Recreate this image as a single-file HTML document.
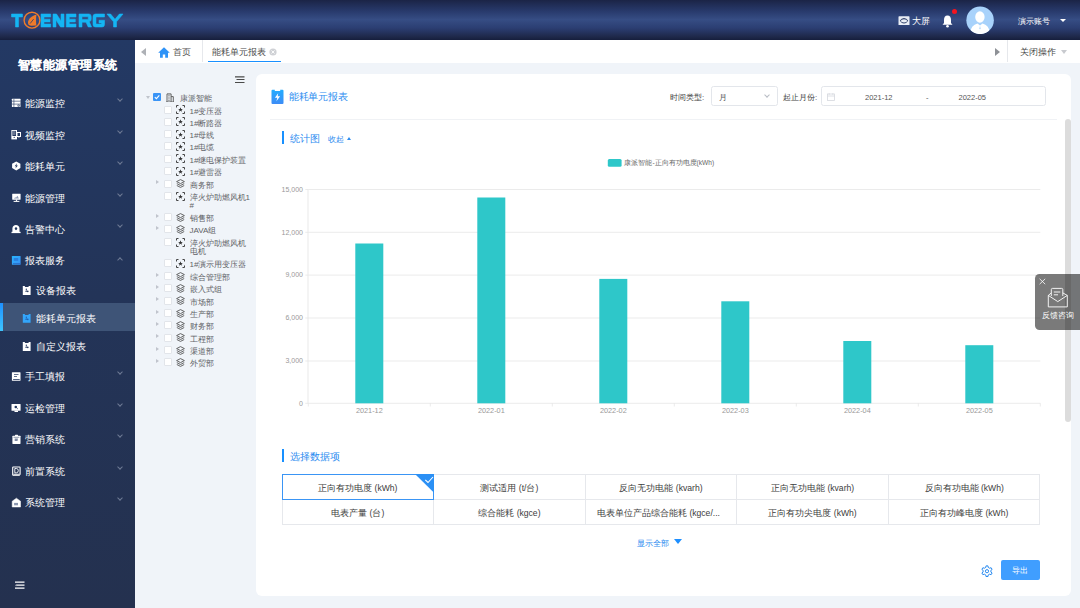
<!DOCTYPE html>
<html><head><meta charset="utf-8">
<style>
*{box-sizing:border-box;margin:0;padding:0}
html,body{width:1080px;height:608px;overflow:hidden;font-family:"Liberation Sans",sans-serif;background:#f0f4f9;position:relative}
.abs{position:absolute}
#hdr{left:0;top:0;width:1080px;height:40px;background:linear-gradient(180deg,#1b2446 0%,#283a6c 28%,#364d84 49%,#2b3e72 70%,#1e2849 92%,#161e3c 100%)}
#side{left:0;top:40px;width:135px;height:568px;background:linear-gradient(180deg,#233964 0%,#233458 45%,#24314f 100%)}
#stitle{left:0;top:56.5px;-webkit-text-stroke:0.12px #fff;width:135px;text-align:center;color:#fff;font-size:12px;font-weight:bold;line-height:16px;letter-spacing:0.5px;padding-left:0px}
.mi{position:absolute;left:0;width:135px;height:20px;color:#fff;font-size:10px;line-height:20px}
.mi .t{position:absolute;left:25px;top:0;white-space:nowrap}
.mi svg{position:absolute;left:10.5px;top:4px;width:10px;height:11px}
.mi .ch{position:absolute;left:118.3px;top:3px;width:4px;height:4px;border-right:1px solid #6f7b95;border-bottom:1px solid #6f7b95;transform:rotate(45deg)}
.mi .ch.up{transform:rotate(-135deg);top:6.5px}
.sub .t{left:36px}
.sub svg{left:21.8px}
#tabs{left:135px;top:40px;width:945px;height:22.5px;background:#fff}
.tx{position:absolute;white-space:nowrap}
.tr{position:absolute;font-size:8px;color:#606266;white-space:nowrap;line-height:8.3px}
#card{left:256px;top:73.8px;width:815px;height:522.6px;background:#fff;border-radius:6px}
</style></head><body>
<div id="hdr" class="abs">
<svg class="abs" style="left:0;top:0" width="135" height="40" viewBox="0 0 135 40">
 <g fill="#14b5f4" fill-rule="evenodd" stroke="#14b5f4" stroke-width=".55" stroke-linejoin="round">
  <path d="M11.5,14H22.5V17H18.5V27H15.5V17H11.5Z"/>
  <path d="M41,14H50.7V17H44V19.2H50V21.9H44V24H50.7V27H41Z"/>
  <path d="M53,14H56.5L61,21V14H64V27H60.5L56,20V27H53Z"/>
  <path d="M66.3,14H76V17H69.3V19.2H75.3V21.9H69.3V24H76V27H66.3Z"/>
  <path d="M79,14H89Q91.2,14 91.2,16.5V19Q91.2,21.3 89.3,21.8L91.6,27H88.2L86,22.2H82V27H79ZM82,16.8V19.4H88.2V16.8Z"/>
  <path d="M93,16.5Q93,14 95.5,14H104.5V17H96V24H101.5V23H99V20.3H104.5V24.5Q104.5,27 102,27H95.5Q93,27 93,24.5Z"/>
  <path d="M106.9,14H110.6L115,19.3L119.4,14H123L116.5,21.8V27H113.5V21.8Z"/>
 </g>
 <circle cx="32" cy="20.2" r="7.9" fill="none" stroke="#ee7b2b" stroke-width="1.4"/><path d="M36.5,14.8C32.5,15.3 28,18.8 28,22.8C28,25 29.4,25.7 31.5,25.7L36.4,25.5C35.9,21.8 35.9,18.2 36.5,14.8Z" fill="#ee7b2b"/><path d="M30.4,23.2 33.4,19.4" stroke="#2a3d6b" stroke-width=".8" stroke-linecap="round"/></svg>
<!-- header right -->
<svg class="abs" style="left:897.5px;top:15.5px" width="12" height="9.5" viewBox="0 0 12 9.5"><rect x="0.5" y="0.3" width="11" height="9" rx=".6" fill="#e9edf5"/><path d="M1.8,4.8Q3.5,2 6,2Q8.5,2 10.2,4.8Q8.5,7.5 6,7.5Q3.5,7.5 1.8,4.8Z" fill="#2b3d68"/><ellipse cx="6" cy="4.8" rx="3" ry="1.6" fill="#e9edf5"/></svg>
<div class="tx" style="left:911.5px;top:16.3px;font-size:8.5px;color:#fff;line-height:11px">大屏</div>
<svg class="abs" style="left:941px;top:14px" width="13" height="14" viewBox="0 0 13 14"><path d="M6.5,1.5C4,1.5 3,3.5 3,6V9L1.5,10.8H11.5L10,9V6C10,3.5 9,1.5 6.5,1.5Z" fill="#fff"/><circle cx="6.5" cy="12.2" r="1.3" fill="#fff"/></svg>
<div class="abs" style="left:951.5px;top:9px;width:5px;height:5px;border-radius:50%;background:#f5141e"></div>
<svg class="abs" style="left:966px;top:6px" width="28" height="28" viewBox="0 0 28 28"><defs><clipPath id="cav"><circle cx="14.1" cy="14.3" r="13.75"/></clipPath></defs><circle cx="14.1" cy="14.3" r="13.75" fill="#a8d2fb"/><ellipse cx="13.9" cy="11" rx="4.7" ry="5.8" fill="#fff"/><path clip-path="url(#cav)" d="M4.5,26Q5,19.5 11.5,17.6L14,19.5L16.5,17.6Q23,19.5 23.5,26V29H4.5Z" fill="#fff"/><path d="M14,19.8 13.4,22.5 14,23.5 14.6,22.5Z" fill="#a8d2fb"/></svg>
<div class="tx" style="left:1017.5px;top:15.7px;font-size:7.8px;color:#fff;line-height:12px">演示账号</div>
<div class="abs" style="left:1059.5px;top:19px;width:0;height:0;border-left:3px solid transparent;border-right:3px solid transparent;border-top:3.5px solid #fff"></div>
</div>

<div id="side" class="abs"></div>
<div id="stitle" class="abs">智慧能源管理系统</div>
<div class="mi" style="top:94px"><svg viewBox="0 0 10 11"><rect x="0.9" y="0.8" width="8.6" height="8.3" rx=".5" fill="#fff"/><path d="M0.9,3.2H9.5M0.9,6.1H9.5M2.9,0.8V9.1" stroke="#24385f" stroke-width=".6"/><circle cx="7.6" cy="7.7" r="1.1" fill="#24385f"/><circle cx="7.6" cy="7.7" r=".5" fill="#fff"/></svg><span class="t">能源监控</span><i class="ch"></i></div>
<div class="mi" style="top:126px"><svg viewBox="0 0 10 11"><rect x="0.9" y="0.4" width="4.6" height="8.5" fill="none" stroke="#fff" stroke-width="1"/><rect x="0.9" y="6" width="4.6" height="3" fill="#fff"/><circle cx="3.2" cy="7.4" r=".6" fill="#24385f"/><path d="M2,2H4.5M2,4H4.5" stroke="#fff" stroke-width=".6"/><rect x="6" y="2.5" width="3.5" height="4" fill="none" stroke="#fff" stroke-width="1"/><path d="M7,6.5 8,8.2 8.6,6.5Z" fill="#fff"/></svg><span class="t">视频监控</span><i class="ch"></i></div>
<div class="mi" style="top:157px"><svg viewBox="0 0 10 11"><path d="M5.25,0.4 9.4,2.7V7.1L5.25,9.4 1.1,7.1V2.7Z" fill="#fff"/><path d="M6,2.2 3.7,5.3H5.1L4.4,7.6 6.9,4.4H5.4Z" fill="#24385f"/></svg><span class="t">能耗单元</span><i class="ch"></i></div>
<div class="mi" style="top:189px"><svg viewBox="0 0 10 11"><rect x="1.2" y="0.7" width="8.4" height="6" rx=".4" fill="#fff"/><path d="M2.8,5.6 4.3,4.2 5,4.8 6.4,2.8 7.9,5.6Z" fill="#8d9ab5"/><rect x="4.9" y="6.5" width="1.2" height="1.6" fill="#fff"/><rect x="2.6" y="7.9" width="5.8" height="1" fill="#fff"/></svg><span class="t">能源管理</span><i class="ch"></i></div>
<div class="mi" style="top:220px"><svg viewBox="0 0 10 11"><path d="M1.4,7.9V4.4C1.4,2.3 3,0.9 4.95,0.9C6.9,0.9 8.5,2.3 8.5,4.4V7.9Z" fill="#fff"/><rect x="0.5" y="7.8" width="9.1" height="1.3" fill="#fff"/><path d="M5,3.2Q6.2,3.2 6.2,4.4Q6.2,5.3 5,6.2Q3.8,5.3 3.8,4.4Q3.8,3.2 5,3.2Z" fill="#24385f"/></svg><span class="t">告警中心</span><i class="ch"></i></div>
<div class="mi" style="top:251px"><svg viewBox="0 0 10 11"><defs><linearGradient id="gbb" x1="0" y1="0" x2="1" y2="1"><stop offset="0" stop-color="#27b6ff"/><stop offset="1" stop-color="#3a8ef5"/></linearGradient></defs><rect x="0.9" y="1" width="8.7" height="8.8" rx=".6" fill="url(#gbb)"/><rect x="2.8" y="3" width="4.4" height="2.9" fill="#2a7fe0"/><path d="M2,8.6H9" stroke="#2660b8" stroke-width=".7"/></svg><span class="t">报表服务</span><i class="ch up"></i></div>
<div class="mi sub" style="top:281px"><svg viewBox="0 0 10 11"><path d="M0.8,0.9H2.6L3.2,2H6.3L6.9,0.9H8.6V10H0.8Z" fill="#fff"/><path d="M4.3,3.6V5.6" stroke="#24385f" stroke-width="1"/><path d="M3.3,6.4H5.8" stroke="#24385f" stroke-width=".8"/><circle cx="5.8" cy="6.4" r=".8" fill="#24385f"/></svg><span class="t">设备报表</span></div>
<div class="abs" style="left:0;top:303px;width:135px;height:28px;background:#3e5477"></div>
<div class="abs" style="left:0;top:303px;width:3.3px;height:28px;background:linear-gradient(180deg,#1e90ff,#3ec6ff)"></div>
<div class="mi sub" style="top:309px"><svg viewBox="0 0 10 11"><path d="M0.8,0.9H2.6L3.2,2H6.3L6.9,0.9H8.6V9.8H0.8Z" fill="#33a6fb"/><path d="M4.3,3.6V5.6" stroke="#1f5fb0" stroke-width="1"/><path d="M3.3,6.4H5.8" stroke="#1f5fb0" stroke-width=".8"/><circle cx="5.8" cy="6.4" r=".8" fill="#1f5fb0"/></svg><span class="t">能耗单元报表</span></div>
<div class="mi sub" style="top:337px"><svg viewBox="0 0 10 11"><path d="M0.8,0.9H2.6L3.2,2H6.3L6.9,0.9H8.6V10H0.8Z" fill="#fff"/><path d="M4.3,3.6V5.6" stroke="#24385f" stroke-width="1"/><path d="M3.3,6.4H5.8" stroke="#24385f" stroke-width=".8"/><circle cx="5.8" cy="6.4" r=".8" fill="#24385f"/></svg><span class="t">自定义报表</span></div>
<div class="mi" style="top:367px"><svg viewBox="0 0 10 11"><rect x="0.9" y="1.2" width="8.6" height="8.6" rx=".5" fill="#fff"/><path d="M3,3.5H7.5M3,5.5H6" stroke="#24385f" stroke-width=".7"/><path d="M2.1,8.5H8.7" stroke="#24385f" stroke-width=".8"/></svg><span class="t">手工填报</span><i class="ch"></i></div>
<div class="mi" style="top:399px"><svg viewBox="0 0 10 11"><rect x="0.5" y="0.9" width="9.1" height="6.9" rx=".4" fill="#fff"/><rect x="3.5" y="7.6" width="3.5" height="1.4" fill="#fff"/><circle cx="4.8" cy="4" r="1.3" fill="#24385f"/><path d="M5.6,4.8 6.8,5.9" stroke="#24385f" stroke-width=".8"/></svg><span class="t">运检管理</span><i class="ch"></i></div>
<div class="mi" style="top:430px"><svg viewBox="0 0 10 11"><rect x="1.4" y="1.8" width="8.1" height="8.2" rx=".4" fill="#fff"/><rect x="4" y="0.8" width="3" height="1.6" rx=".5" fill="#fff"/><path d="M2.5,3.3H8.4" stroke="#24385f" stroke-width=".5"/><path d="M3.7,4.5H7L6.5,7H3.7Z" fill="#7f8aa3"/></svg><span class="t">营销系统</span><i class="ch"></i></div>
<div class="mi" style="top:462px"><svg viewBox="0 0 10 11"><path d="M1.7,9.3V1.6Q1.7,1 2.3,1H8.5Q9.1,1 9.1,1.6V8.2H2.5" fill="none" stroke="#fff" stroke-width="1.1"/><path d="M1.7,9.4H8.8" stroke="#fff" stroke-width=".9"/><path d="M3.8,2.5H5.4Q7.3,2.5 7.3,4.6Q7.3,6.8 5.4,6.8H3.8Z" fill="none" stroke="#fff" stroke-width=".9"/></svg><span class="t">前置系统</span><i class="ch"></i></div>
<div class="mi" style="top:493px"><svg viewBox="0 0 10 11"><path d="M1.2,4.2 5.4,1.2 9.6,4.2V10H1.2Z" fill="#fff" stroke="#fff" stroke-width=".5" stroke-linejoin="round"/><rect x="3.1" y="5.9" width="3.9" height="2.4" fill="#8a96af"/></svg><span class="t">系统管理</span><i class="ch"></i></div>
<svg class="abs" style="left:14.5px;top:581px" width="10" height="8.5" viewBox="0 0 10 8.5"><path d="M0,1.2H9.5M2,4.2H9.5M0,7.1H9.5" stroke="#fff" stroke-width="1.2"/><path d="M1.6,3.1 0.2,4.2 1.6,5.3Z" fill="#fff"/></svg>

<div id="tabs" class="abs"></div>
<div class="abs" style="left:140.5px;top:47.5px;width:0;height:0;border-top:4.5px solid transparent;border-bottom:4.5px solid transparent;border-right:5.5px solid #aeb1b6"></div>
<svg class="abs" style="left:157.5px;top:46.5px" width="12" height="11" viewBox="0 0 12 11"><path d="M6,0.3 0.2,5.8H2V10.8H4.8V7.5H7.2V10.8H10V5.8H11.8Z" fill="#2f93f7"/></svg>
<div class="tx" style="left:173px;top:46px;font-size:9px;color:#555;line-height:12px">首页</div>
<div class="abs" style="left:202px;top:40px;width:1px;height:22px;background:#e6e8ec"></div>
<div class="tx" style="left:212px;top:46px;font-size:9px;color:#4a4a4a;line-height:12px">能耗单元报表</div>
<svg class="abs" style="left:268.5px;top:48px" width="8" height="8" viewBox="0 0 8 8"><circle cx="4" cy="4" r="3.6" fill="#cfd1d5"/><path d="M2.5,2.5 5.5,5.5M5.5,2.5 2.5,5.5" stroke="#fff" stroke-width=".9"/></svg>
<div class="abs" style="left:207.5px;top:60.8px;width:73.5px;height:1.3px;background:#1890ff"></div>
<div class="abs" style="left:995px;top:47.5px;width:0;height:0;border-top:4.5px solid transparent;border-bottom:4.5px solid transparent;border-left:5.5px solid #8e9196"></div>
<div class="abs" style="left:1007px;top:40px;width:1px;height:22px;background:#e6e8ec"></div>
<div class="tx" style="left:1020px;top:46px;font-size:9px;color:#4a4a4a;line-height:12px">关闭操作</div>
<div class="abs" style="left:1061px;top:50px;width:0;height:0;border-left:3.5px solid transparent;border-right:3.5px solid transparent;border-top:4px solid #c8cacf"></div>

<!-- tree -->
<svg class="abs" style="left:235px;top:75px" width="10" height="9" viewBox="0 0 10 9"><path d="M0,1.8H9.5M1.5,4.5H9.5M0,7.5H9.5" stroke="#4a4a4a" stroke-width="1.2"/></svg>

<svg width="0" height="0" style="position:absolute"><defs><symbol id="idev" viewBox="0 0 9 9"><path d="M0.5,2.5V0.5H2.5M6.5,0.5H8.5V2.5M8.5,6.5V8.5H6.5M2.5,8.5H0.5V6.5" fill="none" stroke="#444" stroke-width="1"/><path d="M4.5,2.2 5.1,3.9 6.9,3.9 5.5,5 6,6.7 4.5,5.7 3,6.7 3.5,5 2.1,3.9 3.9,3.9Z" fill="#333"/></symbol><symbol id="igrp" viewBox="0 0 9 9"><path d="M4.5,0.6 8.4,2.6 4.5,4.6 0.6,2.6Z" fill="none" stroke="#555" stroke-width=".9"/><path d="M0.8,4.6 4.5,6.5 8.2,4.6M0.8,6.5 4.5,8.4 8.2,6.5" fill="none" stroke="#555" stroke-width=".9"/></symbol><symbol id="ibld" viewBox="0 0 8 9.5"><path d="M1,9V0.9H5.1V9M5.1,3.6H7.3V9M0.2,9H7.8" fill="none" stroke="#555" stroke-width=".9"/><path d="M2,2.3H2.7M3.4,2.3H4.1M2,4.1H2.7M3.4,4.1H4.1M2,5.9H2.7M3.4,5.9H4.1M2,7.6H2.7M3.4,7.6H4.1" stroke="#555" stroke-width=".8"/></symbol></defs></svg>
<div class="abs" style="left:146px;top:95.5px;width:0;height:0;border-left:2.5px solid transparent;border-right:2.5px solid transparent;border-top:3px solid #c0c4cc"></div>
<div class="abs" style="left:153.3px;top:93px;width:8px;height:8px;border-radius:1px;background:#3a94f6"></div>
<svg class="abs" style="left:153.3px;top:93px" width="8" height="8" viewBox="0 0 8 8"><path d="M1.8,4.1 3.4,5.6 6.3,2.4" fill="none" stroke="#fff" stroke-width="1.1"/></svg>
<svg class="abs" style="left:166.3px;top:92.6px" width="8" height="9.5"><use href="#ibld"/></svg>
<div class="tr" style="left:179.6px;top:94.5px">康派智能</div>
<div class="abs" style="left:163.6px;top:105.5px;width:8px;height:8px;border-radius:1px;background:#fff;border:0.6px solid #e2e5ea"></div>
<svg class="abs" style="left:176px;top:105.1px" width="9" height="9"><use href="#idev"/></svg>
<div class="tr" style="left:189.6px;top:107.5px">1#变压器</div>
<div class="abs" style="left:163.6px;top:117.8px;width:8px;height:8px;border-radius:1px;background:#fff;border:0.6px solid #e2e5ea"></div>
<svg class="abs" style="left:176px;top:117.4px" width="9" height="9"><use href="#idev"/></svg>
<div class="tr" style="left:189.6px;top:119.8px">1#断路器</div>
<div class="abs" style="left:163.6px;top:130.0px;width:8px;height:8px;border-radius:1px;background:#fff;border:0.6px solid #e2e5ea"></div>
<svg class="abs" style="left:176px;top:129.6px" width="9" height="9"><use href="#idev"/></svg>
<div class="tr" style="left:189.6px;top:132.0px">1#母线</div>
<div class="abs" style="left:163.6px;top:142.1px;width:8px;height:8px;border-radius:1px;background:#fff;border:0.6px solid #e2e5ea"></div>
<svg class="abs" style="left:176px;top:141.7px" width="9" height="9"><use href="#idev"/></svg>
<div class="tr" style="left:189.6px;top:144.1px">1#电缆</div>
<div class="abs" style="left:163.6px;top:154.7px;width:8px;height:8px;border-radius:1px;background:#fff;border:0.6px solid #e2e5ea"></div>
<svg class="abs" style="left:176px;top:154.3px" width="9" height="9"><use href="#idev"/></svg>
<div class="tr" style="left:189.6px;top:156.7px">1#继电保护装置</div>
<div class="abs" style="left:163.6px;top:167.0px;width:8px;height:8px;border-radius:1px;background:#fff;border:0.6px solid #e2e5ea"></div>
<svg class="abs" style="left:176px;top:166.6px" width="9" height="9"><use href="#idev"/></svg>
<div class="tr" style="left:189.6px;top:169.0px">1#避雷器</div>
<div class="abs" style="left:156.4px;top:180.3px;width:0;height:0;border-top:2.5px solid transparent;border-bottom:2.5px solid transparent;border-left:3px solid #c0c4cc"></div>
<div class="abs" style="left:163.6px;top:179.5px;width:8px;height:8px;border-radius:1px;background:#fff;border:0.6px solid #e2e5ea"></div>
<svg class="abs" style="left:176px;top:179.1px" width="9" height="9"><use href="#igrp"/></svg>
<div class="tr" style="left:189.6px;top:181.5px">商务部</div>
<div class="abs" style="left:163.6px;top:192.2px;width:8px;height:8px;border-radius:1px;background:#fff;border:0.6px solid #e2e5ea"></div>
<svg class="abs" style="left:176px;top:191.8px" width="9" height="9"><use href="#idev"/></svg>
<div class="tr" style="left:189.6px;top:194.2px">淬火炉助燃风机1</div>
<div class="tr" style="left:189.6px;top:202.4px">#</div>
<div class="abs" style="left:156.4px;top:213.7px;width:0;height:0;border-top:2.5px solid transparent;border-bottom:2.5px solid transparent;border-left:3px solid #c0c4cc"></div>
<div class="abs" style="left:163.6px;top:212.9px;width:8px;height:8px;border-radius:1px;background:#fff;border:0.6px solid #e2e5ea"></div>
<svg class="abs" style="left:176px;top:212.5px" width="9" height="9"><use href="#igrp"/></svg>
<div class="tr" style="left:189.6px;top:214.9px">销售部</div>
<div class="abs" style="left:156.4px;top:226.1px;width:0;height:0;border-top:2.5px solid transparent;border-bottom:2.5px solid transparent;border-left:3px solid #c0c4cc"></div>
<div class="abs" style="left:163.6px;top:225.3px;width:8px;height:8px;border-radius:1px;background:#fff;border:0.6px solid #e2e5ea"></div>
<svg class="abs" style="left:176px;top:224.9px" width="9" height="9"><use href="#igrp"/></svg>
<div class="tr" style="left:189.6px;top:227.3px">JAVA组</div>
<div class="abs" style="left:163.6px;top:238.1px;width:8px;height:8px;border-radius:1px;background:#fff;border:0.6px solid #e2e5ea"></div>
<svg class="abs" style="left:176px;top:237.7px" width="9" height="9"><use href="#idev"/></svg>
<div class="tr" style="left:189.6px;top:240.1px">淬火炉助燃风机</div>
<div class="tr" style="left:189.6px;top:248.3px">电机</div>
<div class="abs" style="left:163.6px;top:259.3px;width:8px;height:8px;border-radius:1px;background:#fff;border:0.6px solid #e2e5ea"></div>
<svg class="abs" style="left:176px;top:258.9px" width="9" height="9"><use href="#idev"/></svg>
<div class="tr" style="left:189.6px;top:261.3px">1#演示用变压器</div>
<div class="abs" style="left:156.4px;top:272.7px;width:0;height:0;border-top:2.5px solid transparent;border-bottom:2.5px solid transparent;border-left:3px solid #c0c4cc"></div>
<div class="abs" style="left:163.6px;top:271.9px;width:8px;height:8px;border-radius:1px;background:#fff;border:0.6px solid #e2e5ea"></div>
<svg class="abs" style="left:176px;top:271.5px" width="9" height="9"><use href="#igrp"/></svg>
<div class="tr" style="left:189.6px;top:273.9px">综合管理部</div>
<div class="abs" style="left:156.4px;top:285.0px;width:0;height:0;border-top:2.5px solid transparent;border-bottom:2.5px solid transparent;border-left:3px solid #c0c4cc"></div>
<div class="abs" style="left:163.6px;top:284.2px;width:8px;height:8px;border-radius:1px;background:#fff;border:0.6px solid #e2e5ea"></div>
<svg class="abs" style="left:176px;top:283.8px" width="9" height="9"><use href="#igrp"/></svg>
<div class="tr" style="left:189.6px;top:286.2px">嵌入式组</div>
<div class="abs" style="left:156.4px;top:297.3px;width:0;height:0;border-top:2.5px solid transparent;border-bottom:2.5px solid transparent;border-left:3px solid #c0c4cc"></div>
<div class="abs" style="left:163.6px;top:296.5px;width:8px;height:8px;border-radius:1px;background:#fff;border:0.6px solid #e2e5ea"></div>
<svg class="abs" style="left:176px;top:296.1px" width="9" height="9"><use href="#igrp"/></svg>
<div class="tr" style="left:189.6px;top:298.5px">市场部</div>
<div class="abs" style="left:156.4px;top:309.7px;width:0;height:0;border-top:2.5px solid transparent;border-bottom:2.5px solid transparent;border-left:3px solid #c0c4cc"></div>
<div class="abs" style="left:163.6px;top:308.9px;width:8px;height:8px;border-radius:1px;background:#fff;border:0.6px solid #e2e5ea"></div>
<svg class="abs" style="left:176px;top:308.5px" width="9" height="9"><use href="#igrp"/></svg>
<div class="tr" style="left:189.6px;top:310.9px">生产部</div>
<div class="abs" style="left:156.4px;top:322.0px;width:0;height:0;border-top:2.5px solid transparent;border-bottom:2.5px solid transparent;border-left:3px solid #c0c4cc"></div>
<div class="abs" style="left:163.6px;top:321.2px;width:8px;height:8px;border-radius:1px;background:#fff;border:0.6px solid #e2e5ea"></div>
<svg class="abs" style="left:176px;top:320.8px" width="9" height="9"><use href="#igrp"/></svg>
<div class="tr" style="left:189.6px;top:323.2px">财务部</div>
<div class="abs" style="left:156.4px;top:334.3px;width:0;height:0;border-top:2.5px solid transparent;border-bottom:2.5px solid transparent;border-left:3px solid #c0c4cc"></div>
<div class="abs" style="left:163.6px;top:333.5px;width:8px;height:8px;border-radius:1px;background:#fff;border:0.6px solid #e2e5ea"></div>
<svg class="abs" style="left:176px;top:333.1px" width="9" height="9"><use href="#igrp"/></svg>
<div class="tr" style="left:189.6px;top:335.5px">工程部</div>
<div class="abs" style="left:156.4px;top:346.7px;width:0;height:0;border-top:2.5px solid transparent;border-bottom:2.5px solid transparent;border-left:3px solid #c0c4cc"></div>
<div class="abs" style="left:163.6px;top:345.9px;width:8px;height:8px;border-radius:1px;background:#fff;border:0.6px solid #e2e5ea"></div>
<svg class="abs" style="left:176px;top:345.5px" width="9" height="9"><use href="#igrp"/></svg>
<div class="tr" style="left:189.6px;top:347.9px">渠道部</div>
<div class="abs" style="left:156.4px;top:359.1px;width:0;height:0;border-top:2.5px solid transparent;border-bottom:2.5px solid transparent;border-left:3px solid #c0c4cc"></div>
<div class="abs" style="left:163.6px;top:358.3px;width:8px;height:8px;border-radius:1px;background:#fff;border:0.6px solid #e2e5ea"></div>
<svg class="abs" style="left:176px;top:357.9px" width="9" height="9"><use href="#igrp"/></svg>
<div class="tr" style="left:189.6px;top:360.3px">外贸部</div>
<div id="card" class="abs"></div>
<!-- card header -->
<svg class="abs" style="left:271px;top:88.5px" width="13" height="15.5" viewBox="0 0 13 15.5"><defs><linearGradient id="gclip" x1="0" y1="0" x2="0" y2="1"><stop offset="0" stop-color="#22acff"/><stop offset="1" stop-color="#3d8cf6"/></linearGradient></defs><path d="M1.5,0.8H3.8V2H9.2V0.8H11.5Q12.5,0.8 12.5,1.8V14Q12.5,15 11.5,15H1.5Q0.5,15 0.5,14V1.8Q0.5,0.8 1.5,0.8Z" fill="url(#gclip)"/><path d="M7.2,4.2 3.9,8.8H6.3L5.4,12.3 9.1,7.3H6.7Z" fill="#fff"/></svg>
<div class="tx" style="left:289px;top:90px;font-size:10px;letter-spacing:-0.3px;color:#2c8cf0;line-height:13px">能耗单元报表</div>
<div class="tx" style="left:670px;top:92px;font-size:7.8px;color:#444;line-height:11px">时间类型:</div>
<div class="abs" style="left:710.5px;top:86.3px;width:67px;height:20px;border:0.8px solid #e3e6eb;border-radius:2.5px;background:#fff"></div>
<div class="tx" style="left:718.5px;top:92px;font-size:7.8px;color:#555;line-height:11px">月</div>
<div class="abs" style="left:765px;top:93px;width:4px;height:4px;border-right:0.8px solid #b8bcc4;border-bottom:0.8px solid #b8bcc4;transform:rotate(45deg)"></div>
<div class="tx" style="left:783px;top:92px;font-size:7.8px;color:#444;line-height:11px">起止月份:</div>
<div class="abs" style="left:820.5px;top:86.3px;width:225px;height:20px;border:0.8px solid #e3e6eb;border-radius:2.5px;background:#fff"></div>
<svg class="abs" style="left:827px;top:93px" width="8" height="8" viewBox="0 0 8 8"><rect x=".5" y="1" width="7" height="6.5" fill="none" stroke="#d5d8de" stroke-width=".8"/><path d="M.5,3H7.5M2.2,.2V1.8M5.8,.2V1.8" stroke="#d5d8de" stroke-width=".8"/></svg>
<div class="tx" style="left:865px;top:92px;font-size:7.5px;color:#555;line-height:11px">2021-12</div>
<div class="tx" style="left:926px;top:92px;font-size:7.5px;color:#555;line-height:11px">-</div>
<div class="tx" style="left:958.5px;top:92px;font-size:7.5px;color:#555;line-height:11px">2022-05</div>
<div class="abs" style="left:270px;top:118.5px;width:787px;height:1px;background:#f0f2f5"></div>
<div class="abs" style="left:1065px;top:119px;width:6px;height:303px;border-radius:3px;background:#dcdcdc"></div>
<!-- stat header -->
<div class="abs" style="left:281.5px;top:130.7px;width:2.3px;height:13.7px;background:#1890ff"></div>
<div class="tx" style="left:290px;top:131.8px;font-size:9.8px;color:#2c8cf0;line-height:13px">统计图</div>
<div class="tx" style="left:327.5px;top:133.7px;font-size:7.8px;color:#2c8cf0;line-height:11px">收起</div>
<div class="abs" style="left:346.5px;top:137px;width:0;height:0;border-left:2.8px solid transparent;border-right:2.8px solid transparent;border-bottom:3.2px solid #2c8cf0"></div>
<!-- select section -->
<!--CHART--><svg class="abs" style="left:0;top:0" width="1080" height="608" viewBox="0 0 1080 608" font-family="Liberation Sans, sans-serif">
<path d="M308.3,189.5H1040.3" stroke="#e6e6e6" stroke-width="0.8"/>
<path d="M305.3,189.5H308.3" stroke="#e6e6e6" stroke-width="0.8"/>
<text x="303" y="191.8" text-anchor="end" font-size="7" fill="#999">15,000</text>
<path d="M308.3,232.3H1040.3" stroke="#e6e6e6" stroke-width="0.8"/>
<path d="M305.3,232.3H308.3" stroke="#e6e6e6" stroke-width="0.8"/>
<text x="303" y="234.60000000000002" text-anchor="end" font-size="7" fill="#999">12,000</text>
<path d="M308.3,275.1H1040.3" stroke="#e6e6e6" stroke-width="0.8"/>
<path d="M305.3,275.1H308.3" stroke="#e6e6e6" stroke-width="0.8"/>
<text x="303" y="277.40000000000003" text-anchor="end" font-size="7" fill="#999">9,000</text>
<path d="M308.3,318.0H1040.3" stroke="#e6e6e6" stroke-width="0.8"/>
<path d="M305.3,318.0H308.3" stroke="#e6e6e6" stroke-width="0.8"/>
<text x="303" y="320.3" text-anchor="end" font-size="7" fill="#999">6,000</text>
<path d="M308.3,361.0H1040.3" stroke="#e6e6e6" stroke-width="0.8"/>
<path d="M305.3,361.0H308.3" stroke="#e6e6e6" stroke-width="0.8"/>
<text x="303" y="363.3" text-anchor="end" font-size="7" fill="#999">3,000</text>
<path d="M308.3,403.3H1040.3" stroke="#e6e6e6" stroke-width="0.8"/>
<path d="M305.3,403.3H308.3" stroke="#e6e6e6" stroke-width="0.8"/>
<text x="303" y="405.6" text-anchor="end" font-size="7" fill="#999">0</text>
<path d="M308,189.5V403.3" stroke="#e6e6e6" stroke-width="0.9"/>
<path d="M308.3,403.3V406.5" stroke="#e6e6e6" stroke-width="0.8"/>
<path d="M430.3,403.3V406.5" stroke="#e6e6e6" stroke-width="0.8"/>
<path d="M552.3,403.3V406.5" stroke="#e6e6e6" stroke-width="0.8"/>
<path d="M674.3,403.3V406.5" stroke="#e6e6e6" stroke-width="0.8"/>
<path d="M796.3,403.3V406.5" stroke="#e6e6e6" stroke-width="0.8"/>
<path d="M918.3,403.3V406.5" stroke="#e6e6e6" stroke-width="0.8"/>
<path d="M1040.3,403.3V406.5" stroke="#e6e6e6" stroke-width="0.8"/>
<rect x="355.3" y="243.5" width="28" height="159.8" fill="#2ec7c9"/>
<text x="369.3" y="413.2" text-anchor="middle" font-size="7.3" fill="#999">2021-12</text>
<rect x="477.3" y="197.5" width="28" height="205.8" fill="#2ec7c9"/>
<text x="491.3" y="413.2" text-anchor="middle" font-size="7.3" fill="#999">2022-01</text>
<rect x="599.3" y="278.9" width="28" height="124.4" fill="#2ec7c9"/>
<text x="613.3" y="413.2" text-anchor="middle" font-size="7.3" fill="#999">2022-02</text>
<rect x="721.3" y="301.3" width="28" height="102.0" fill="#2ec7c9"/>
<text x="735.3" y="413.2" text-anchor="middle" font-size="7.3" fill="#999">2022-03</text>
<rect x="843.3" y="341.0" width="28" height="62.3" fill="#2ec7c9"/>
<text x="857.3" y="413.2" text-anchor="middle" font-size="7.3" fill="#999">2022-04</text>
<rect x="965.3" y="345.2" width="28" height="58.1" fill="#2ec7c9"/>
<text x="979.3" y="413.2" text-anchor="middle" font-size="7.3" fill="#999">2022-05</text>
<rect x="607.8" y="158.9" width="13.8" height="7.8" rx="1.5" fill="#2ec7c9"/>
<text x="624.4" y="164.6" font-size="6.6" fill="#666">康派智能-正向有功电度(kWh)</text>
</svg><!--/CHART-->
<div class="abs" style="left:281.5px;top:448.8px;width:2.3px;height:13.7px;background:#1890ff"></div>
<div class="tx" style="left:290px;top:449.5px;font-size:9.8px;color:#2c8cf0;line-height:13px">选择数据项</div>

<div class="abs" style="left:282px;top:474px;width:758.0px;height:51.0px;border:1px solid #e6e8ec;background:#fff"></div>
<div class="abs" style="left:433px;top:474px;width:1px;height:50.0px;background:#e6e8ec"></div>
<div class="abs" style="left:585px;top:474px;width:1px;height:50.0px;background:#e6e8ec"></div>
<div class="abs" style="left:736px;top:474px;width:1px;height:50.0px;background:#e6e8ec"></div>
<div class="abs" style="left:888px;top:474px;width:1px;height:50.0px;background:#e6e8ec"></div>
<div class="abs" style="left:282px;top:499.0px;width:758.0px;height:1px;background:#e6e8ec"></div>
<div class="tx" style="left:282.0px;top:483.2px;width:151.6px;text-align:center;font-size:8.6px;color:#3c3c3c;line-height:11px">正向有功电度 (kWh)</div>
<div class="tx" style="left:433.6px;top:483.2px;width:151.6px;text-align:center;font-size:8.6px;color:#3c3c3c;line-height:11px">测试适用 (t/台)</div>
<div class="tx" style="left:585.2px;top:483.2px;width:151.6px;text-align:center;font-size:8.6px;color:#3c3c3c;line-height:11px">反向无功电能 (kvarh)</div>
<div class="tx" style="left:736.8px;top:483.2px;width:151.6px;text-align:center;font-size:8.6px;color:#3c3c3c;line-height:11px">正向无功电能 (kvarh)</div>
<div class="tx" style="left:888.4px;top:483.2px;width:151.6px;text-align:center;font-size:8.6px;color:#3c3c3c;line-height:11px">反向有功电能 (kWh)</div>
<div class="tx" style="left:282.0px;top:507.8px;width:151.6px;text-align:center;font-size:8.6px;color:#3c3c3c;line-height:11px">电表产量 (台)</div>
<div class="tx" style="left:433.6px;top:507.8px;width:151.6px;text-align:center;font-size:8.6px;color:#3c3c3c;line-height:11px">综合能耗 (kgce)</div>
<div class="tx" style="left:597px;top:507.8px;font-size:8.6px;color:#3c3c3c;line-height:11px">电表单位产品综合能耗 (kgce/...</div>
<div class="tx" style="left:736.8px;top:507.8px;width:151.6px;text-align:center;font-size:8.6px;color:#3c3c3c;line-height:11px">正向有功尖电度 (kWh)</div>
<div class="tx" style="left:888.4px;top:507.8px;width:151.6px;text-align:center;font-size:8.6px;color:#3c3c3c;line-height:11px">正向有功峰电度 (kWh)</div>
<div class="abs" style="left:282px;top:474px;width:152px;height:26px;border:1px solid #3a95f5"></div>
<svg class="abs" style="left:414.6px;top:474px" width="19.8" height="19.5" viewBox="0 0 19.8 19.5"><path d="M0,0H19.8V19.5Z" fill="#2b90f5"/><path d="M10.3,5.8 13,8.5 18,3" fill="none" stroke="#fff" stroke-width="1.1"/></svg>
<div class="tx" style="left:637px;top:539px;font-size:7.5px;color:#2c8cf0;line-height:10px">显示全部</div>
<div class="abs" style="left:674px;top:539px;width:0;height:0;border-left:4px solid transparent;border-right:4px solid transparent;border-top:5.5px solid #1e8fff"></div>
<svg class="abs" style="left:980.6px;top:564.6px" width="12" height="12.5" viewBox="0 0 12 12.5"><path d="M4.83,2.37 L4.97,0.90 L7.03,0.90 L7.17,2.37 L8.73,3.27 L10.08,2.66 L11.11,4.44 L9.90,5.30 L9.90,7.10 L11.11,7.96 L10.08,9.74 L8.73,9.13 L7.17,10.03 L7.03,11.50 L4.97,11.50 L4.83,10.03 L3.27,9.13 L1.92,9.74 L0.89,7.96 L2.10,7.10 L2.10,5.30 L0.89,4.44 L1.92,2.66 L3.27,3.27Z" fill="none" stroke="#2c8cf0" stroke-width="1" stroke-linejoin="round"/><circle cx="6" cy="6.2" r="1.6" fill="none" stroke="#2c8cf0" stroke-width="1"/></svg>
<div class="abs" style="left:1000.5px;top:560px;width:39.3px;height:19.7px;border-radius:2px;background:#409eff"></div>
<div class="tx" style="left:1000.5px;top:564.5px;width:39.3px;text-align:center;font-size:7.5px;color:#fff;line-height:11px">导出</div>

<div class="abs" style="left:1035px;top:273.5px;width:50px;height:56.2px;border-radius:4.5px;background:rgba(0,0,0,.52)"></div>
<svg class="abs" style="left:1035px;top:273.5px" width="45" height="56" viewBox="0 0 45 56"><path d="M4.6,4.8 10.2,10.2M10.2,4.8 4.6,10.2" stroke="#fff" stroke-width=".8"/><path d="M16.3,22V15.6Q16.3,14.4 17.5,14.4H26.6Q27.8,14.4 27.8,15.6V22" fill="none" stroke="#fff" stroke-width=".9"/><path d="M18.8,18H25.3M18.8,20.8H23" stroke="#fff" stroke-width=".9"/><path d="M16.3,18.9 13.3,21.4V32.9H32.3V21.4L27.8,18.9" fill="none" stroke="#fff" stroke-width=".9" stroke-linejoin="round"/><path d="M13.3,21.4 22.8,27.6 32.3,21.4" fill="none" stroke="#fff" stroke-width=".9"/></svg>
<div class="tx" style="left:1041.5px;top:309.5px;font-size:7.9px;color:#fff;line-height:11px">反馈咨询</div>
</body></html>
